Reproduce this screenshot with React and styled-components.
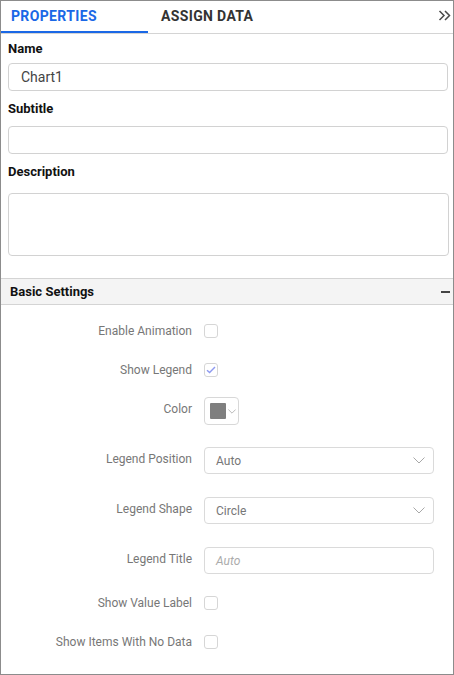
import React from 'react';
import styled, { createGlobalStyle } from 'styled-components';

const GlobalStyle = createGlobalStyle`
  html, body {
    margin: 0;
    padding: 0;
    background: #fff;
    font-family: Roboto, "Liberation Sans", Arial, sans-serif;
  }
  * { box-sizing: border-box; }
`;

const Panel = styled.div`
  width: 454px;
  height: 675px;
  border: 1px solid #8c8c8c;
  background: #fff;
  display: flex;
  flex-direction: column;
  overflow: hidden;
`;

const TabBar = styled.div`
  display: flex;
  align-items: stretch;
  height: 33px;
  border-bottom: 1px solid #d4d4d4;
`;

const Tab = styled.div`
  display: flex;
  align-items: center;
  width: ${p => p.$w}px;
  padding-left: ${p => p.$pl}px;
  padding-bottom: 3px;
  font-size: 14px;
  font-weight: 700;
  letter-spacing: 0.35px;
  color: ${p => (p.$active ? '#1a68e6' : '#333')};
  box-shadow: ${p => (p.$active ? 'inset 0 -2px 0 #1a68e6' : 'none')};
`;

const TabSpacer = styled.div`
  flex: 1;
  display: flex;
  align-items: center;
  justify-content: flex-end;
  padding-right: 2px;
  padding-bottom: 3px;
`;

const Form = styled.div`
  display: flex;
  flex-direction: column;
  padding: 7px 5px 0 7px;
`;

const Label = styled.div`
  font-size: 13px;
  font-weight: 700;
  line-height: 16px;
  color: #111;
  margin-top: ${p => p.$mt || 0}px;
  margin-bottom: ${p => p.$mb}px;
`;

const TextInput = styled.div`
  height: 28px;
  border: 1px solid #d2d2d2;
  border-radius: 4px;
  display: flex;
  align-items: center;
  padding-left: 12px;
  font-size: 14px;
  color: #444;
`;

const TextArea = styled.div`
  height: 63px;
  border: 1px solid #d2d2d2;
  border-radius: 4px;
  margin-right: -1px;
`;

const SectionHeader = styled.div`
  margin-top: 22px;
  height: 27px;
  background: #f4f4f4;
  border-top: 1px solid #d4d4d4;
  border-bottom: 1px solid #d4d4d4;
  display: flex;
  align-items: center;
  justify-content: space-between;
  padding: 0 3px 0 9px;
  font-size: 13px;
  font-weight: 700;
  color: #111;
`;

const Minus = styled.span`
  width: 9px;
  height: 2px;
  background: #444;
  margin-top: 1px;
`;

const Settings = styled.div`
  display: flex;
  flex-direction: column;
  padding-top: 6px;
`;

const Row = styled.div`
  display: flex;
  align-items: center;
  height: ${p => p.$h}px;
`;

const RowLabel = styled.div`
  width: 191px;
  text-align: right;
  font-size: 12px;
  color: #777;
  margin-right: 12px;
  margin-top: ${p => p.$dy || 0}px;
`;

const Checkbox = styled.span`
  width: 14px;
  height: 14px;
  border: 1px solid #d6d6d6;
  border-radius: 3px;
  display: flex;
  align-items: center;
  justify-content: center;
`;

const ColorPicker = styled.div`
  width: 35px;
  height: 28px;
  border: 1px solid #d8d8d8;
  border-radius: 4px;
  display: flex;
  align-items: center;
  padding-left: 5px;
  gap: 2px;
`;

const Swatch = styled.span`
  width: 16px;
  height: 16px;
  background: #7f7f7f;
  border-radius: 1px;
`;

const Field = styled.div`
  width: 230px;
  height: 27px;
  border: 1px solid #dadada;
  border-radius: 4px;
  display: flex;
  align-items: center;
  justify-content: space-between;
  padding: 0 8px 0 11px;
  font-size: 12px;
  color: ${p => (p.$placeholder ? '#ababab' : '#777')};
  font-style: ${p => (p.$placeholder ? 'italic' : 'normal')};
`;

const DoubleChevron = () => (
  <svg width="13" height="11" viewBox="0 0 13 11" fill="none" stroke="#4a4a4a" strokeWidth="1.5">
    <path d="M1.5 1l4.5 4.5L1.5 10" />
    <path d="M7 1l4.5 4.5L7 10" />
  </svg>
);

const Chevron = ({ size = 12, color = '#a8a8a8' }) => (
  <svg width={size} height={size / 2 + 1} viewBox="0 0 12 7" fill="none" stroke={color} strokeWidth="1">
    <path d="M0.5 0.5L6 6l5.5-5.5" />
  </svg>
);

const Check = () => (
  <svg width="10" height="8" viewBox="0 0 10 8" fill="none" stroke="#8e9af0" strokeWidth="1.4">
    <path d="M1 4.2l2.6 2.4L9 1" />
  </svg>
);

const SettingRow = ({ label, h, dy, children }) => (
  <Row $h={h}>
    <RowLabel $dy={dy}>{label}</RowLabel>
    {children}
  </Row>
);

export default function App() {
  return (
    <>
      <GlobalStyle />
      <Panel>
        <TabBar>
          <Tab $active $w={147} $pl={10}>PROPERTIES</Tab>
          <Tab $w={120} $pl={13}>ASSIGN DATA</Tab>
          <TabSpacer>
            <DoubleChevron />
          </TabSpacer>
        </TabBar>

        <Form>
          <Label $mb={6}>Name</Label>
          <TextInput>Chart1</TextInput>
          <Label $mt={10} $mb={9}>Subtitle</Label>
          <TextInput />
          <Label $mt={10} $mb={13}>Description</Label>
          <TextArea />
        </Form>

        <SectionHeader>
          Basic Settings
          <Minus />
        </SectionHeader>

        <Settings>
          <SettingRow label="Enable Animation" h={39}>
            <Checkbox />
          </SettingRow>
          <SettingRow label="Show Legend" h={39}>
            <Checkbox><Check /></Checkbox>
          </SettingRow>
          <SettingRow label="Color" h={44} dy={-5}>
            <ColorPicker>
              <Swatch />
              <Chevron size={8} color="#999" />
            </ColorPicker>
          </SettingRow>
          <SettingRow label="Legend Position" h={55} dy={-3}>
            <Field>Auto<Chevron /></Field>
          </SettingRow>
          <SettingRow label="Legend Shape" h={45} dy={-3}>
            <Field>Circle<Chevron /></Field>
          </SettingRow>
          <SettingRow label="Legend Title" h={55} dy={-3}>
            <Field $placeholder>Auto</Field>
          </SettingRow>
          <SettingRow label="Show Value Label" h={30}>
            <Checkbox />
          </SettingRow>
          <SettingRow label="Show Items With No Data" h={48}>
            <Checkbox />
          </SettingRow>
        </Settings>
      </Panel>
    </>
  );
}
